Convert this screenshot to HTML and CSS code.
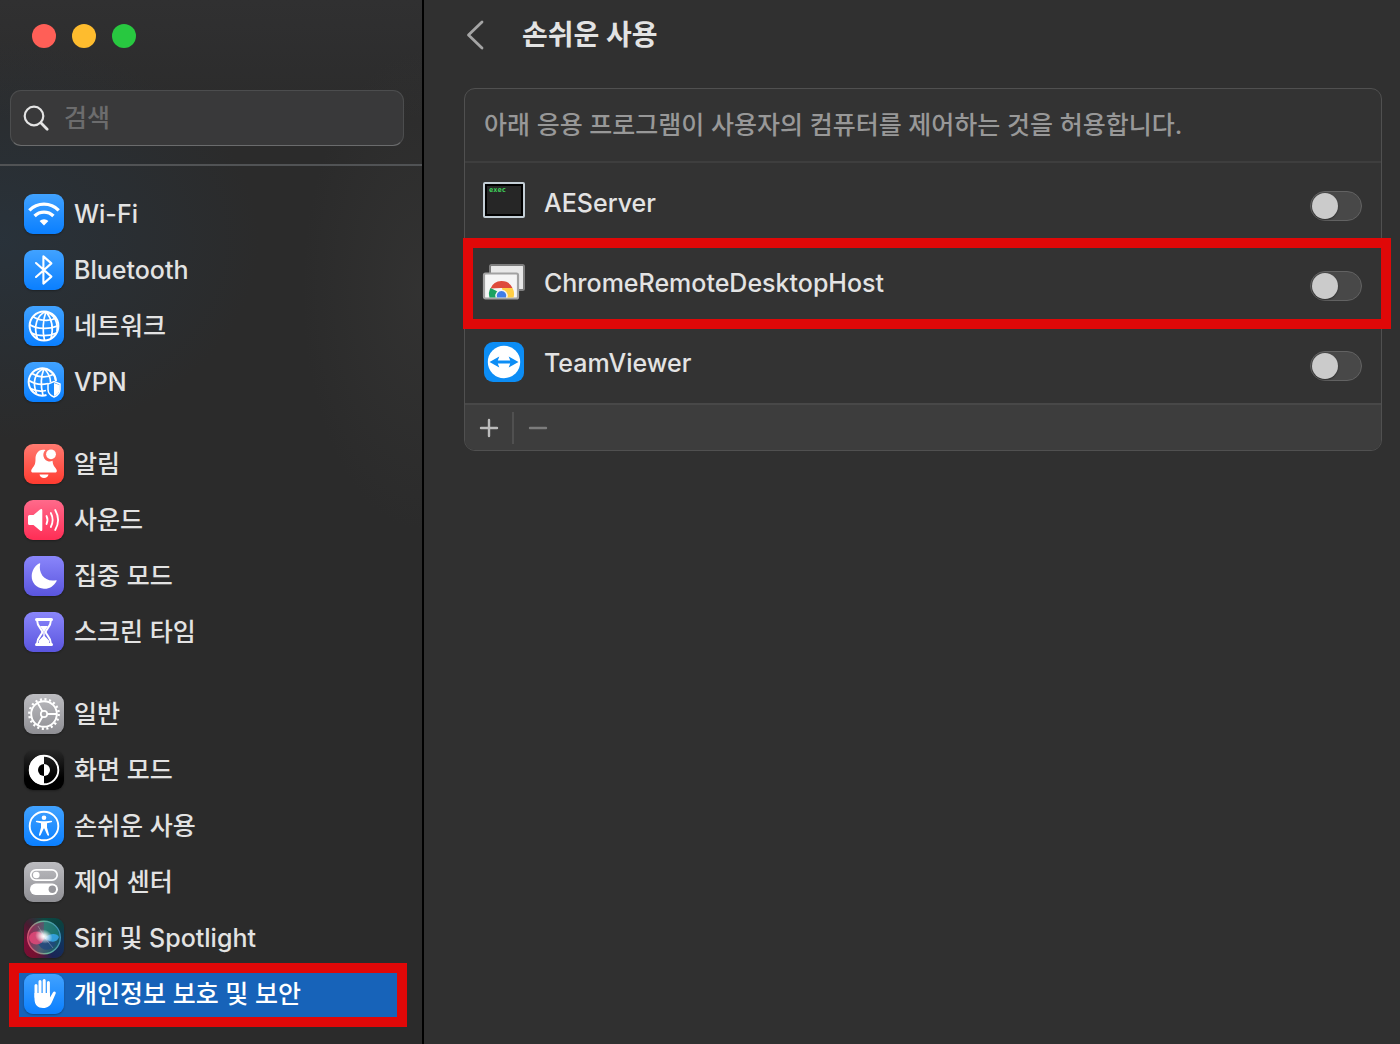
FILE: index.html
```html
<!DOCTYPE html>
<html lang="ko">
<head>
    <meta charset="UTF-8">
    <meta name="viewport" content="width=device-width, initial-scale=1.0">
    <title>손쉬운 사용</title>
    <link rel="stylesheet" href="styles.css">
</head>
<body>

<div class="window">
    <aside class="sidebar">
        <div class="sidebar-top">
            <div class="lights">
                <button class="light red" aria-label="닫기"></button>
                <button class="light yellow" aria-label="최소화"></button>
                <button class="light green" aria-label="확대"></button>
            </div>
            <label class="search">
                <svg width="28" height="28" viewBox="0 0 28 28" fill="none" stroke="#e4e4e4" stroke-linecap="round">
                    <circle cx="12" cy="12" r="9.3" stroke-width="2.2"/>
                    <path d="M18.8 18.8L25.2 25.2" stroke-width="2.8"/>
                </svg>
                <input type="text" placeholder="검색" aria-label="검색">
            </label>
        </div>

        <nav class="menu">
            <div class="group">
                <a class="item" href="#">
                    <svg class="icon blue" viewBox="0 0 40 40" fill="none" stroke="#fff" stroke-width="3.3">
                        <path d="M5.3 16.3A20.6 20.6 0 0 1 34.7 16.3"/>
                        <path d="M10.6 22A13.2 13.2 0 0 1 29.4 22"/>
                        <path d="M20 31.4L15.6 27A6.2 6.2 0 0 1 24.4 27Z" fill="#fff" stroke="none"/>
                    </svg>
                    Wi-Fi
                </a>
                <a class="item" href="#">
                    <svg class="icon blue" viewBox="0 0 40 40" fill="none" stroke="#fff" stroke-width="2.1" stroke-linejoin="round" stroke-linecap="round">
                        <path d="M12 13L27.4 26.6L19.4 33.6V6.4L27.4 13.4L12 27"/>
                    </svg>
                    Bluetooth
                </a>
                <a class="item" href="#">
                    <svg class="icon blue" viewBox="0 0 40 40" fill="none" stroke="#fff" stroke-width="1.7">
                        <circle cx="20" cy="20" r="14.4" stroke-width="2"/>
                        <path d="M22 5.5C13 9 9 20 13.5 33M22 5.5C19 14 18.5 25 20.5 34.5M22 5.5C28 13 29.5 23 27 32.5M22 5.5C30 9 34 16 33 25"/>
                        <path d="M9 10.5C15 15 26 15.5 32 12M5.5 18.5C13 23.5 26 23.5 34.5 19.5M7.5 27C14 30.5 25 30.5 32.5 27"/>
                    </svg>
                    네트워크
                </a>
                <a class="item" href="#">
                    <svg class="icon blue" viewBox="0 0 40 40" fill="none" stroke="#fff" stroke-width="1.7">
                        <path d="M22.5 33A13.7 13.7 0 1 1 32 19" stroke-width="2"/>
                        <path d="M20 6.5C11 10 8 20 12.5 31.5M20 6.5C17 14 16.5 24 19 33.5M20 6.5C24.5 11 26.5 15 26.5 20M20 6.5C27 8 31 13 31.5 18"/>
                        <path d="M8 11.5C14 15.5 23 16 29 12.5M5 18.5C12 23 18 23 24 21.5M6.5 26.5C11 29 17 29.5 22 28.5"/>
                        <path d="M30 19.5L36 22V27.5C36 31 33.5 33.5 30 35C26.5 33.5 24 31 24 27.5V22Z" fill="#1a8bff" stroke="#fff" stroke-width="1.5"/>
                        <path d="M30 21L35.5 23V28C35 31 33 33 30 34Z" fill="#fff" stroke="none"/>
                    </svg>
                    VPN
                </a>
            </div>

            <div class="group">
                <a class="item" href="#">
                    <svg class="icon coral" viewBox="0 0 40 40" fill="#fff">
                        <path d="M21.5 6C14.5 4.3 11.5 10 11.5 14.5C11.5 20 10.5 21.5 8.5 24C6.5 26.5 7 28.5 9 28.5H31C33.2 28.5 33.5 26.5 31.5 24C29.7 21.7 28.8 20.5 28.5 16.8A6.5 6.5 0 0 1 21.5 6Z"/>
                        <path d="M15.5 30.5H24.5C24 32.7 22.5 34 20 34S16 32.7 15.5 30.5Z"/>
                        <circle cx="27" cy="10.3" r="4.9"/>
                    </svg>
                    알림
                </a>
                <a class="item" href="#">
                    <svg class="icon pink" viewBox="0 0 40 40" fill="none" stroke="#fff" stroke-linecap="round">
                        <path d="M5.5 15H9.5L16 9.5C17.5 8.5 18.3 9 18.3 10.5V29.5C18.3 31 17.5 31.5 16 30.5L9.5 25H5.5Q4 25 4 23.5V16.5Q4 15 5.5 15Z" fill="#fff" stroke="none"/>
                        <path d="M22.5 16Q24.5 20 22.5 24M26.8 13Q30.5 20 26.8 27M31.2 10Q37 20 31.2 30" stroke-width="1.8"/>
                    </svg>
                    사운드
                </a>
                <a class="item" href="#">
                    <svg class="icon indigo" viewBox="0 0 40 40" fill="#fff">
                        <path d="M16.2 7.8C14 17.5 21 26.5 32 24.2Q33.2 24 32.5 25.2C29.5 30.5 25 33 20 32.7C12.5 32.3 7.5 26.5 7.7 20C7.9 14.5 10.5 10 15 7.4Q16.4 6.7 16.2 7.8Z"/>
                    </svg>
                    집중 모드
                </a>
                <a class="item" href="#">
                    <svg class="icon indigo" viewBox="0 0 40 40" fill="none" stroke="#fff">
                        <path d="M12.5 7.5H27.5M12.5 32.5H27.5" stroke-width="3" stroke-linecap="round"/>
                        <path d="M13 8C13 15 18.3 17 18.3 20S13 25 13 32M27 8C27 15 21.7 17 21.7 20S27 25 27 32" stroke-width="2"/>
                        <path d="M16 14H24L20.7 19V24L25 28.5V31H15V28.5L19.3 24V19Z" fill="#fff" stroke="none"/>
                    </svg>
                    스크린 타임
                </a>
            </div>

            <div class="group">
                <a class="item" href="#">
                    <svg class="icon gray" viewBox="0 0 40 40" fill="none" stroke="#fff">
                        <circle cx="20" cy="20" r="14.7" stroke-width="2.4" stroke-dasharray="2.1 2.518"/>
                        <circle cx="20" cy="20" r="12.8" stroke-width="1.9"/>
                        <circle cx="20" cy="20" r="3.2" stroke-width="1.7"/>
                        <path d="M23.2 20H32.5M18.4 17.2L13.7 9M18.4 22.8L13.7 31" stroke-width="1.8"/>
                    </svg>
                    일반
                </a>
                <a class="item" href="#">
                    <svg class="icon black" viewBox="0 0 40 40">
                        <circle cx="20" cy="20" r="14.3" fill="none" stroke="#fff" stroke-width="1.9"/>
                        <path d="M20 5A15 15 0 0 0 20 35Z" fill="#fff"/>
                        <path d="M20 14A6 6 0 0 0 20 26Z" fill="#000"/>
                        <path d="M20 14A6 6 0 0 1 20 26Z" fill="#fff"/>
                    </svg>
                    화면 모드
                </a>
                <a class="item" href="#">
                    <svg class="icon blue" viewBox="0 0 40 40" fill="#fff">
                        <circle cx="20" cy="20" r="14.3" fill="none" stroke="#fff" stroke-width="1.9"/>
                        <circle cx="20" cy="11.7" r="2.3"/>
                        <path d="M12.8 14.7L18 15.3H22L27.2 14.7C28.4 14.6 28.5 16 27.3 16.2L23 17.2V21.5L25 28.5C25.3 29.9 23.8 30.3 23.3 29L20.3 22.5H19.7L16.7 29C16.2 30.3 14.7 29.9 15 28.5L17 21.5V17.2L12.7 16.2C11.5 16 11.6 14.6 12.8 14.7Z"/>
                    </svg>
                    손쉬운 사용
                </a>
                <a class="item" href="#">
                    <svg class="icon gray" viewBox="0 0 40 40">
                        <rect x="6.8" y="7.8" width="26.4" height="10.4" rx="5.2" fill="none" stroke="#fff" stroke-width="1.7"/>
                        <circle cx="12.3" cy="13" r="3.3" fill="#fff"/>
                        <rect x="6" y="21.5" width="28" height="11.5" rx="5.7" fill="#fff"/>
                        <circle cx="28.3" cy="27.2" r="3.7" fill="#98989d"/>
                    </svg>
                    제어 센터
                </a>
                <a class="item" href="#">
                    <svg class="icon siri" viewBox="0 0 40 40">
                        <defs>
                            <linearGradient id="ring" x1="0" y1="0.6" x2="1" y2="0.4">
                                <stop offset="0" stop-color="#d6506f"/>
                                <stop offset="0.5" stop-color="#69b595"/>
                                <stop offset="1" stop-color="#3b8fb5"/>
                            </linearGradient>
                            <linearGradient id="orb" x1="0" y1="0.4" x2="1" y2="0.6">
                                <stop offset="0" stop-color="#a02350"/>
                                <stop offset="0.45" stop-color="#4d5f70"/>
                                <stop offset="1" stop-color="#0f5468"/>
                            </linearGradient>
                            <radialGradient id="glow">
                                <stop offset="0" stop-color="#fff"/>
                                <stop offset="0.3" stop-color="#fff" stop-opacity="0.8"/>
                                <stop offset="1" stop-color="#fff" stop-opacity="0"/>
                            </radialGradient>
                        </defs>
                        <circle cx="20" cy="19.5" r="16.3" fill="url(#orb)" stroke="url(#ring)" stroke-width="1.4"/>
                        <path d="M20 4C30 4 35 12 35 18L20 19Z" fill="#169078" fill-opacity="0.55"/>
                        <path d="M14 25C18 35 29 33 32 25L22 20Z" fill="#1c4480" fill-opacity="0.7"/>
                        <ellipse cx="12.5" cy="20" rx="7.5" ry="6.5" fill="#f04a7c" fill-opacity="0.75"/>
                        <path d="M20 20C26 15 33 15 35 19C33 25 27 25 20 20Z" fill="#35a5e6" fill-opacity="0.9"/>
                        <ellipse cx="20" cy="18.5" rx="9" ry="7" fill="url(#glow)" transform="rotate(22 20 18)"/>
                        <path d="M14 8L20 18M21 20L29 30" stroke="#fff" stroke-opacity="0.25"/>
                    </svg>
                    Siri 및 Spotlight
                </a>
                <a class="item selected" href="#">
                    <svg class="icon blue" viewBox="0 0 40 40" fill="#fff">
                        <path d="M12 11.5V23M16 7.5V21M20.2 6.5V21M24.4 8.5V22" stroke="#fff" stroke-width="3" stroke-linecap="round"/>
                        <path d="M10.5 19V25C10.5 31 14 34 19 34C24 34 26.5 31.5 28 28L31.7 19.5C32.3 17.8 30 16.8 28.9 18.5L26 23.5V19Z"/>
                    </svg>
                    개인정보 보호 및 보안
                </a>
            </div>
        </nav>
    </aside>

    <main class="content">
        <header class="title-bar">
            <button class="back" aria-label="뒤로">
                <svg width="20" height="32" viewBox="0 0 20 32" fill="none" stroke="#a5a5a5" stroke-width="2.8" stroke-linecap="round" stroke-linejoin="round">
                    <path d="M18 3L4.5 16L18 29"/>
                </svg>
            </button>
            <h1>손쉬운 사용</h1>
        </header>

        <section class="panel">
            <p class="note">아래 응용 프로그램이 사용자의 컴퓨터를 제어하는 것을 허용합니다.</p>

            <label class="row">
                <svg class="app" viewBox="0 0 44 44">
                    <rect x="2" y="3" width="40" height="34" rx="1" fill="#000" stroke="#c3ced6" stroke-width="2"/>
                    <rect x="5" y="6" width="34" height="28" fill="#262626"/>
                    <text class="exec" x="7" y="12">exec</text>
                </svg>
                <span class="name">AEServer</span>
                <input class="toggle" type="checkbox">
            </label>
            <label class="row marked">
                <svg class="app" viewBox="0 0 44 44">
                    <rect x="8" y="5" width="34" height="25" rx="1.5" fill="#e8e8e8" stroke="#7e7e7e" stroke-width="2"/>
                    <rect x="2" y="13.5" width="34" height="25" rx="1.5" fill="#f5f5f5" stroke="#a2a2a2" stroke-width="2.2"/>
                    <path d="M8.5 28.5A12 12 0 0 1 30.5 28H19Z" fill="#de4b3c"/>
                    <path d="M8.5 28A12 12 0 0 0 7.5 37.4H15L15.5 31.5Z" fill="#1ba261"/>
                    <path d="M20 28H30.5A12 12 0 0 1 31.5 37.4H22Z" fill="#ffce44"/>
                    <path d="M13.5 37.4A6.2 6.2 0 1 1 25.5 37.4Z" fill="#f5f5f5"/>
                    <path d="M15 37.4A4.8 4.8 0 1 1 24 37.4Z" fill="#3f7de8"/>
                </svg>
                <span class="name">ChromeRemoteDesktopHost</span>
                <input class="toggle" type="checkbox">
            </label>
            <label class="row">
                <svg class="app" viewBox="0 0 44 44">
                    <rect x="2" y="2" width="40" height="40" rx="9" fill="#0c8df5"/>
                    <circle cx="22" cy="22" r="16.2" fill="#fff"/>
                    <path d="M7.5 22L17.3 16.5L15.8 20.5H28.2L26.7 16.5L36.5 22L26.7 27.5L28.2 23.5H15.8L17.3 27.5Z" fill="#0c8df5"/>
                </svg>
                <span class="name">TeamViewer</span>
                <input class="toggle" type="checkbox">
            </label>

            <div class="actions">
                <button class="add" aria-label="추가">
                    <svg width="20" height="20" viewBox="0 0 20 20" stroke="#bcbcbc" stroke-width="2.4" stroke-linecap="round">
                        <path d="M2 10H18M10 2V18"/>
                    </svg>
                </button>
                <button class="remove" aria-label="제거" disabled>
                    <svg width="20" height="20" viewBox="0 0 20 20" stroke="#7c7c7c" stroke-width="2.4" stroke-linecap="round">
                        <path d="M2 10H18"/>
                    </svg>
                </button>
            </div>
        </section>
    </main>
</div>

</body>
</html>
```

FILE: styles.css
```css
* {
    box-sizing: border-box;
}
body {
    margin: 0;
    background-color: #303030;
    color: #e3e3e3;
    font-family: Inter, "Noto Sans CJK KR", sans-serif;
    font-size: 25px;
    font-weight: 500;
    line-height: 34px;
}
button {
    padding: 0;
    border: none;
    background: none;
}
svg {
    display: block;
    flex: none;
}
.window {
    display: flex;
    min-height: 100vh;
}

/* sidebar */
.sidebar {
    flex: none;
    width: 424px;
    border-right: 2px solid #000;
    background:
        radial-gradient(ellipse 260px 200px at 0 240px, rgba(38, 58, 76, 0.45), transparent),
        radial-gradient(ellipse 120px 240px at 100% 290px, rgba(72, 71, 69, 0.25), transparent),
        linear-gradient(#303031, #2b2b2b 120px);
}
.sidebar-top {
    padding: 24px 18px 18px 10px;
    border-bottom: 2px solid #515355;
}
.lights {
    display: flex;
    gap: 16px;
    padding-left: 22px;
    margin-bottom: 42px;
}
.light {
    width: 24px;
    height: 24px;
    border-radius: 50%;
}
.red {
    background-color: #ff5f57;
}
.yellow {
    background-color: #febc2e;
}
.green {
    background-color: #28c840;
}
.search {
    display: flex;
    align-items: center;
    gap: 14px;
    height: 56px;
    padding: 0 11px;
    border: 1px solid #4c4d4e;
    border-bottom-color: #6b6c6d;
    border-radius: 11px;
    background-color: #39393a;
}
.search input {
    flex: 1;
    min-width: 0;
    padding: 0;
    border: none;
    outline: none;
    background: none;
    color: #e3e3e3;
    font: inherit;
}
.search input::placeholder {
    color: #6c6c6d;
    opacity: 1;
}
.menu {
    padding-top: 20px;
}
.group {
    margin-bottom: 26px;
}
.item {
    display: flex;
    align-items: center;
    gap: 10px;
    position: relative;
    isolation: isolate;
    height: 56px;
    padding: 0 24px;
    color: inherit;
    text-decoration: none;
    white-space: nowrap;
}
.icon {
    width: 40px;
    height: 40px;
    border-radius: 9px;
    box-shadow: 0 1px 2px rgba(0, 0, 0, 0.3);
}
.blue {
    background: linear-gradient(#41a2ff, #0a7fff);
}
.coral {
    background: linear-gradient(#ff7a70, #ff3b30);
}
.pink {
    background: linear-gradient(#ff6a8b, #ff2d55);
}
.indigo {
    background: linear-gradient(#8a86fb, #5a55de);
}
.gray {
    background: linear-gradient(#bcbcc0, #8f8f94);
}
.black {
    background: linear-gradient(#282828, #000 70%);
}
.siri {
    background: conic-gradient(#0c4a43, #0b4040, #10335c, #1b2455, #74102f, #7c0d38, #4a1a30, #0c4a43);
}
.selected {
    color: #fff;
}
.selected::after {
    content: "";
    position: absolute;
    inset: -3px 15px -5px 9px;
    z-index: -1;
    border: 10px solid #e00808;
    background-color: #1763b9;
}

/* content */
.content {
    flex: 1;
    min-width: 0;
    padding: 0 18px 0 40px;
}
.title-bar {
    display: flex;
    align-items: center;
    gap: 38px;
    height: 70px;
    margin-bottom: 18px;
}
h1 {
    margin: 0;
    font-size: 28px;
    font-weight: 700;
}
.panel {
    border: 1px solid #505050;
    border-radius: 11px;
    background-color: #333;
}
.note {
    margin: 0;
    padding: 19px;
    border-bottom: 2px solid #3e3e3e;
    color: #989898;
}
.row {
    display: flex;
    align-items: center;
    gap: 18px;
    position: relative;
    height: 80px;
    padding: 0 19px 0 17px;
}
.app {
    width: 44px;
    height: 44px;
    margin-bottom: 2px;
}
.exec {
    fill: #3fd35a;
    font-family: "DejaVu Sans Mono", monospace;
    font-size: 7px;
    font-weight: 700;
}
.name {
    flex: 1;
}
.toggle {
    appearance: none;
    flex: none;
    width: 52px;
    height: 30px;
    margin: 6px 0 0;
    padding: 1px;
    border: 1px solid #626262;
    border-radius: 15px;
    background-color: #484848;
}
.toggle::before {
    content: "";
    display: block;
    width: 26px;
    height: 26px;
    border-radius: 50%;
    background-color: #cbcbcb;
    box-shadow: 0 1px 2px rgba(0, 0, 0, 0.4);
}
.toggle:checked {
    background-color: #0a7fff;
}
.toggle:checked::before {
    margin-left: auto;
}
.marked::after {
    content: "";
    position: absolute;
    inset: -5px -10px -6px -2px;
    border: 10px solid #e00808;
    pointer-events: none;
}
.actions {
    display: flex;
    align-items: center;
    height: 47px;
    border-top: 2px solid #484848;
    border-radius: 0 0 10px 10px;
    background-color: #3d3d3d;
}
.actions button {
    display: flex;
    align-items: center;
    justify-content: center;
    width: 47px;
    height: 32px;
}
.actions .remove {
    width: 50px;
    border-left: 2px solid #505050;
}
```
